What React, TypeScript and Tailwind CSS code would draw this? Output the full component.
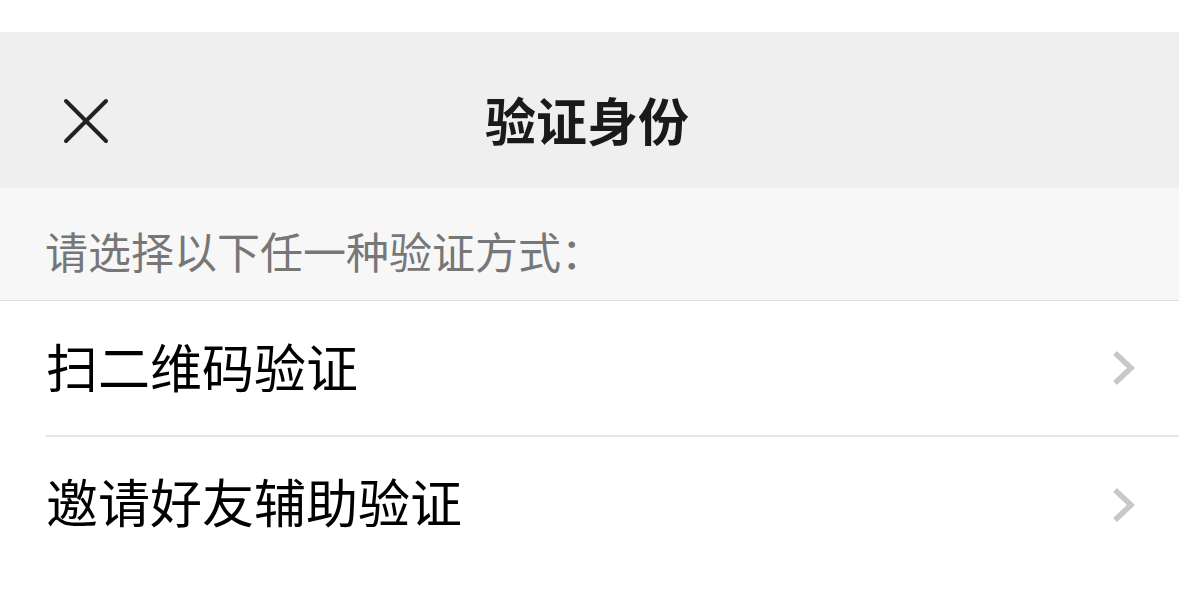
export default function App() {
  const font = { fontFamily: '"Noto Sans CJK SC", "Noto Sans", sans-serif' };
  return (
    <div className="w-[1179px] h-[590px] bg-white overflow-hidden" style={font}>
      <div className="h-[32px] bg-white" />
      <div className="h-[156px] bg-[#efefef] flex items-center relative">
        <div className="absolute left-[63px] top-[66px] w-[46px] h-[46px]">
          <svg viewBox="0 0 46 46" width="46" height="46">
            <path d="M3 3 L43 43 M43 3 L3 43" stroke="#222" strokeWidth="4" strokeLinecap="round" fill="none" />
          </svg>
        </div>
        <div className="flex-1 text-center text-[51px] leading-none font-bold text-[#1a1a1a] pr-[5px] mt-[18px]">验证身份</div>
      </div>
      <div className="h-[113px] bg-[#f7f7f7] border-b border-[#dedede] flex items-center pl-[45px]">
        <span className="text-[43px] leading-none text-[#777777] mt-[13px]">请选择以下任一种验证方式：</span>
      </div>
      <div className="pl-[46px]">
        <div className="h-[136px] flex items-center border-b-2 border-[#e5e5e5]">
          <span className="flex-1 text-[52px] leading-none text-black mb-[4px]">扫二维码验证</span>
          <svg className="mr-[44px]" width="24" height="36" viewBox="0 0 24 36">
            <path d="M4 3 L20 18 L4 33" stroke="#c8c8c8" strokeWidth="5.5" fill="none" strokeLinecap="butt" strokeLinejoin="miter" />
          </svg>
        </div>
        <div className="h-[136px] flex items-center">
          <span className="flex-1 text-[52px] leading-none text-black mb-[8px]">邀请好友辅助验证</span>
          <svg className="mr-[44px]" width="24" height="36" viewBox="0 0 24 36">
            <path d="M4 3 L20 18 L4 33" stroke="#c8c8c8" strokeWidth="5.5" fill="none" strokeLinecap="butt" strokeLinejoin="miter" />
          </svg>
        </div>
      </div>
    </div>
  );
}
